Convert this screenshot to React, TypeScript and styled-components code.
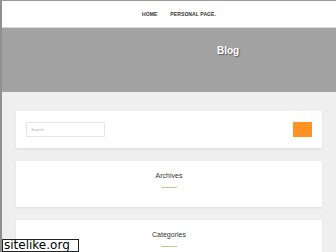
import styled, { createGlobalStyle } from "styled-components";

const GlobalStyle = createGlobalStyle`
	html, body {
		margin: 0;
		padding: 0;
		background: #efefef;
		font-family: "Liberation Sans", Arial, sans-serif;
	}
`;

const App = () => {
	return (
		<>
			<GlobalStyle />
			<Page>
				<NavBar>
					<NavLink>Home</NavLink>
					<NavLink>Personal page.</NavLink>
				</NavBar>
				<Hero>
					<HeroTitle>Blog</HeroTitle>
				</Hero>
				<Content>
					<SearchCard>
						<SearchInput placeholder="Search" />
						<SearchButton />
					</SearchCard>
					<WidgetCard>
						<WidgetTitle>Archives</WidgetTitle>
						<Underline />
					</WidgetCard>
					<WidgetCard>
						<WidgetTitle>Categories</WidgetTitle>
						<Underline />
					</WidgetCard>
				</Content>
				<Watermark>sitelike.org</Watermark>
			</Page>
		</>
	);
};

const Page = styled.div`
	position: relative;
	width: 336px;
	height: 252px;
	overflow: hidden;
	box-sizing: border-box;
	border-top: 1px solid #9a9a9a;
	border-left: 2px solid #8f8f8f;
	background: #efefef;
`;

const NavBar = styled.div`
	height: 27px;
	background: white;
	display: flex;
	justify-content: center;
	align-items: center;
	gap: 13px;
	padding-left: 20px;
	box-sizing: border-box;
	border-bottom: 1px solid #d8d8d8;
`;

const NavLink = styled.span`
	font-size: 5px;
	font-weight: bold;
	text-transform: uppercase;
	color: #333;
	letter-spacing: 0.1px;
`;

const Hero = styled.div`
	height: 64px;
	background: #a2a2a2;
	display: flex;
	align-items: flex-start;
	padding: 17px 0 0 215px;
	box-sizing: border-box;
`;

const HeroTitle = styled.h1`
	margin: 0;
	font-size: 10px;
	font-weight: bold;
	color: white;
	text-shadow: 1px 1px 1px rgba(0, 0, 0, 0.4);
`;

const Content = styled.div`
	display: flex;
	flex-direction: column;
	gap: 13px;
	padding: 19px 14px 0 14px;
`;

const Card = styled.div`
	background: white;
	box-shadow: 0 1px 2px rgba(0, 0, 0, 0.08);
`;

const SearchCard = styled(Card)`
	height: 37px;
	display: flex;
	justify-content: space-between;
	align-items: center;
	padding: 0 10px 0 10px;
	box-sizing: border-box;
`;

const SearchInput = styled.input`
	width: 79px;
	height: 15px;
	box-sizing: border-box;
	border: 1px solid #e6e6e6;
	padding: 0 4px;
	font-size: 4px;
	font-family: "Liberation Sans", Arial, sans-serif;
	outline: none;

	&::placeholder {
		color: #aaa;
	}
`;

const SearchButton = styled.div`
	width: 19px;
	height: 15px;
	background: #ff9222;
`;

const WidgetCard = styled(Card)`
	height: 46px;
	display: flex;
	flex-direction: column;
	align-items: center;
	padding-top: 11px;
	box-sizing: border-box;
`;

const WidgetTitle = styled.div`
	font-size: 7px;
	color: #333;
`;

const Underline = styled.div`
	width: 16px;
	height: 1px;
	margin-top: 8px;
	background: #c9c58e;
`;

const Watermark = styled.div`
	position: absolute;
	left: 0;
	bottom: 0;
	width: 77px;
	height: 13px;
	box-sizing: border-box;
	background: white;
	border: 1px solid #222;
	font-family: "DejaVu Sans", sans-serif;
	font-size: 12px;
	line-height: 11px;
	color: black;
	padding-left: 1px;
	white-space: nowrap;
	overflow: hidden;
`;

export default App;
